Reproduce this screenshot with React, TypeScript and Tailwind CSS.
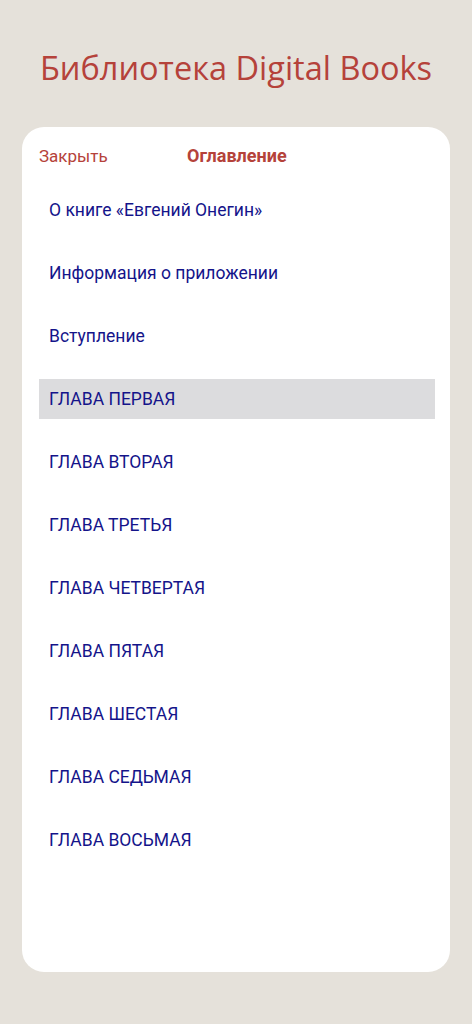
const items = [
  "О книге «Евгений Онегин»",
  "Информация о приложении",
  "Вступление",
  "ГЛАВА ПЕРВАЯ",
  "ГЛАВА ВТОРАЯ",
  "ГЛАВА ТРЕТЬЯ",
  "ГЛАВА ЧЕТВЕРТАЯ",
  "ГЛАВА ПЯТАЯ",
  "ГЛАВА ШЕСТАЯ",
  "ГЛАВА СЕДЬМАЯ",
  "ГЛАВА ВОСЬМАЯ",
];

export default function App() {
  return (
    <div className="min-h-[1024px] w-[472px] bg-[#e5e1da] font-['Roboto',sans-serif]">
      <h1 className="pt-[46px] text-center font-['Open_Sans',sans-serif] text-[32.5px] leading-[43px] text-[#b5423a]">
        Библиотека Digital Books
      </h1>

      <div className="mx-[22px] mt-[38px] h-[845px] rounded-[22px] bg-white px-[17px]">
        <div className="flex items-center pt-[17px] leading-[24px] text-[#b5423a]">
          <span className="w-[148px] text-[17px]">Закрыть</span>
          <span className="text-[18px] font-bold">Оглавление</span>
        </div>

        <ul className="mt-[22px] mr-[-2px] flex flex-col gap-[23px]">
          {items.map((t, i) => (
            <li
              key={t}
              className={
                "flex h-[40px] items-center pl-[10px] text-[17.5px] text-[#14148a] " +
                (i === 3 ? "bg-[#dcdcde]" : "")
              }
            >
              {t}
            </li>
          ))}
        </ul>
      </div>
    </div>
  );
}
